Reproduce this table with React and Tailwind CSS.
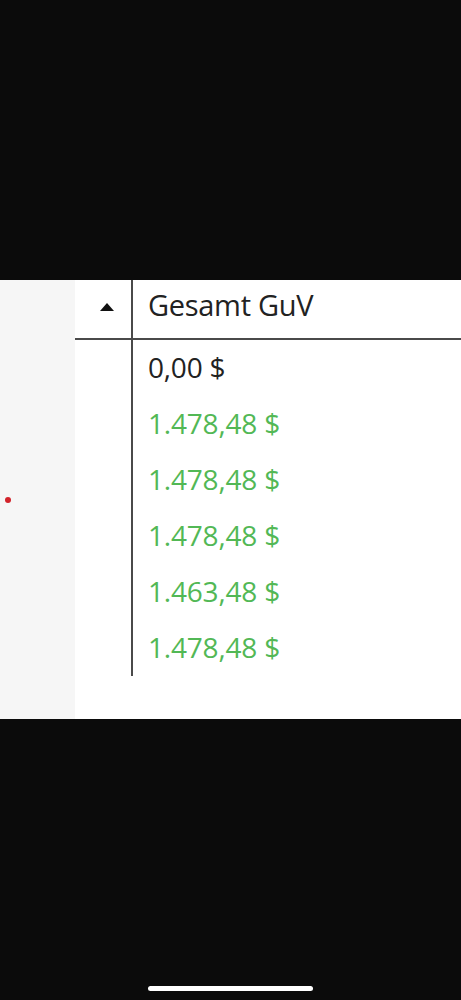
import React from 'react';

const rows = [
  { value: '0,00 $', green: false },
  { value: '1.478,48 $', green: true },
  { value: '1.478,48 $', green: true },
  { value: '1.478,48 $', green: true },
  { value: '1.463,48 $', green: true },
  { value: '1.478,48 $', green: true },
];

const App = () => {
  return (
    <div className="bg-[#0b0b0b] h-[1000px] w-[461px] flex flex-col" style={{ fontFamily: '"Open Sans", "Noto Sans", sans-serif' }}>
      <div className="h-[280px]" />

      <div className="h-[439px] flex bg-white">
        {/* left strip */}
        <div className="w-[75px] bg-[#f6f6f6] flex flex-col">
          <div className="h-[217px]" />
          <div className="ml-[5px] w-[6px] h-[6px] rounded-full bg-[#d2232a]" />
        </div>

        {/* grid */}
        <div className="flex-1 flex flex-col">
          <div className="h-[60px] flex border-b-2 border-[#4a4a4a]">
            <div className="w-[56px] flex items-center justify-end pr-[17px] pb-[4px]">
              <svg width="14" height="8" viewBox="0 0 14 8">
                <polygon points="7,0 14,8 0,8" fill="#111" />
              </svg>
            </div>
            <div className="border-l-2 border-[#4a4a4a] pl-[15px] flex items-center pb-[8px] text-[29px] text-[#222] tracking-[-0.3px]">
              Gesamt GuV
            </div>
          </div>
          <div className="flex">
            <div className="w-[56px]" />
            <div className="border-l-2 border-[#4a4a4a] flex-1">
              {rows.map((r, i) => (
                <div
                  key={i}
                  className={`h-[56px] pl-[15px] pb-[2px] flex items-center text-[28px] tracking-[-0.2px] ${r.green ? 'text-[#52b855]' : 'text-[#222]'}`}
                >
                  {r.value}
                </div>
              ))}
            </div>
          </div>
        </div>
      </div>

      <div className="flex-1 flex flex-col justify-end items-center pb-[9px]">
        <div className="w-[165px] h-[5px] rounded-full bg-white" />
      </div>
    </div>
  );
};

export default App;
